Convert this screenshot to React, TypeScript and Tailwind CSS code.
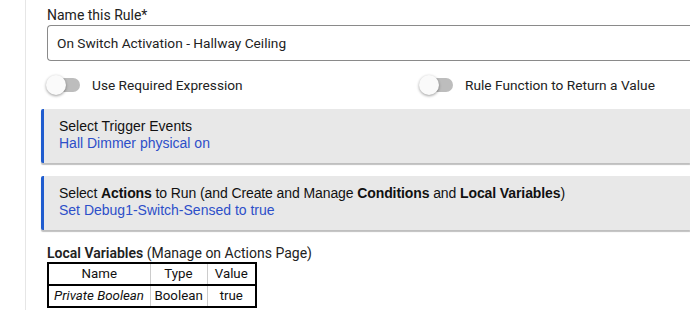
import React from "react";

function Toggle() {
  return (
    <div className="relative w-[32px] h-[20px] flex items-center">
      <div className="w-[32px] h-[14px] rounded-full bg-[#bdbdbd]" />
      <div className="absolute left-[-2px] top-0 w-[20px] h-[20px] rounded-full bg-[#fafafa] shadow-[0_1px_3px_rgba(0,0,0,0.4)]" />
    </div>
  );
}

export default function App() {
  return (
    <div className="w-[690px] h-[310px] overflow-hidden bg-white flex">
      <div className="w-[26px] shrink-0 border-r border-[#e6e6e6]" />
      <div className="flex-1 pl-[14px] font-['Roboto',sans-serif]">
        <div className="pl-[7px] pt-[6px] text-[14px] leading-[18px] text-[#222]">Name this Rule*</div>
        <div className="ml-[7px] mt-[1px] h-[36px] border border-[#8a8a8a] border-r-0 rounded-l-[4px] flex items-center pl-[9px] text-[13.7px] text-[#222]">
          On Switch Activation - Hallway Ceiling
        </div>
        <div className="flex items-center h-[48px] pl-[8px] text-[13.7px] text-[#222]">
          <div className="flex items-center w-[373px]">
            <Toggle />
            <span className="ml-[12px]">Use Required Expression</span>
          </div>
          <div className="flex items-center">
            <Toggle />
            <span className="ml-[12px]">Rule Function to Return a Value</span>
          </div>
        </div>
        <div className="ml-[1px] font-['Liberation_Sans',Arial,sans-serif] text-[14px]">
          <div className="h-[54px] bg-[#e8e8e8] border-l-[3px] border-[#1f5ccf] shadow-[0_2px_1px_rgba(0,0,0,0.25)] rounded-l-[2px] pl-[15px] pt-[9px] leading-[17px]">
            <div className="text-[#111]">Select Trigger Events</div>
            <div className="text-[#2d4fc9]">Hall Dimmer physical on</div>
          </div>
          <div className="mt-[13px] h-[54px] bg-[#e8e8e8] border-l-[3px] border-[#1f5ccf] shadow-[0_2px_1px_rgba(0,0,0,0.25)] rounded-l-[2px] pl-[15px] pt-[9px] leading-[17px]">
            <div className="text-[#111] tracking-[-0.1px]">
              Select <b>Actions</b> to Run (and Create and Manage <b>Conditions</b> and <b>Local Variables</b>)
            </div>
            <div className="text-[#2d4fc9]">Set Debug1-Switch-Sensed to true</div>
          </div>
        </div>
        <div className="pl-[7px] pt-[14px] text-[14px] leading-[18px] text-[#222]">
          <b className="font-semibold">Local Variables</b> (Manage on Actions Page)
        </div>
        <table className="ml-[7px] w-[208px] table-fixed border-2 border-black border-collapse text-[13.3px] text-[#111] whitespace-nowrap">
          <colgroup>
            <col className="w-[102px]" />
            <col className="w-[57px]" />
            <col className="w-[49px]" />
          </colgroup>
          <tbody>
            <tr className="h-[21px]">
              <td className="border border-[#ccc] border-b-2 border-b-black px-[3px] text-center">Name</td>
              <td className="border border-[#ccc] border-b-2 border-b-black px-[3px] text-center">Type</td>
              <td className="border border-[#ccc] border-b-2 border-b-black px-[3px] text-center">Value</td>
            </tr>
            <tr className="h-[20px]">
              <td className="border border-[#ccc] px-[5px] italic">Private Boolean</td>
              <td className="border border-[#ccc] px-[4px]">Boolean</td>
              <td className="border border-[#ccc] px-[4px] text-center">true</td>
            </tr>
          </tbody>
        </table>
      </div>
    </div>
  );
}
